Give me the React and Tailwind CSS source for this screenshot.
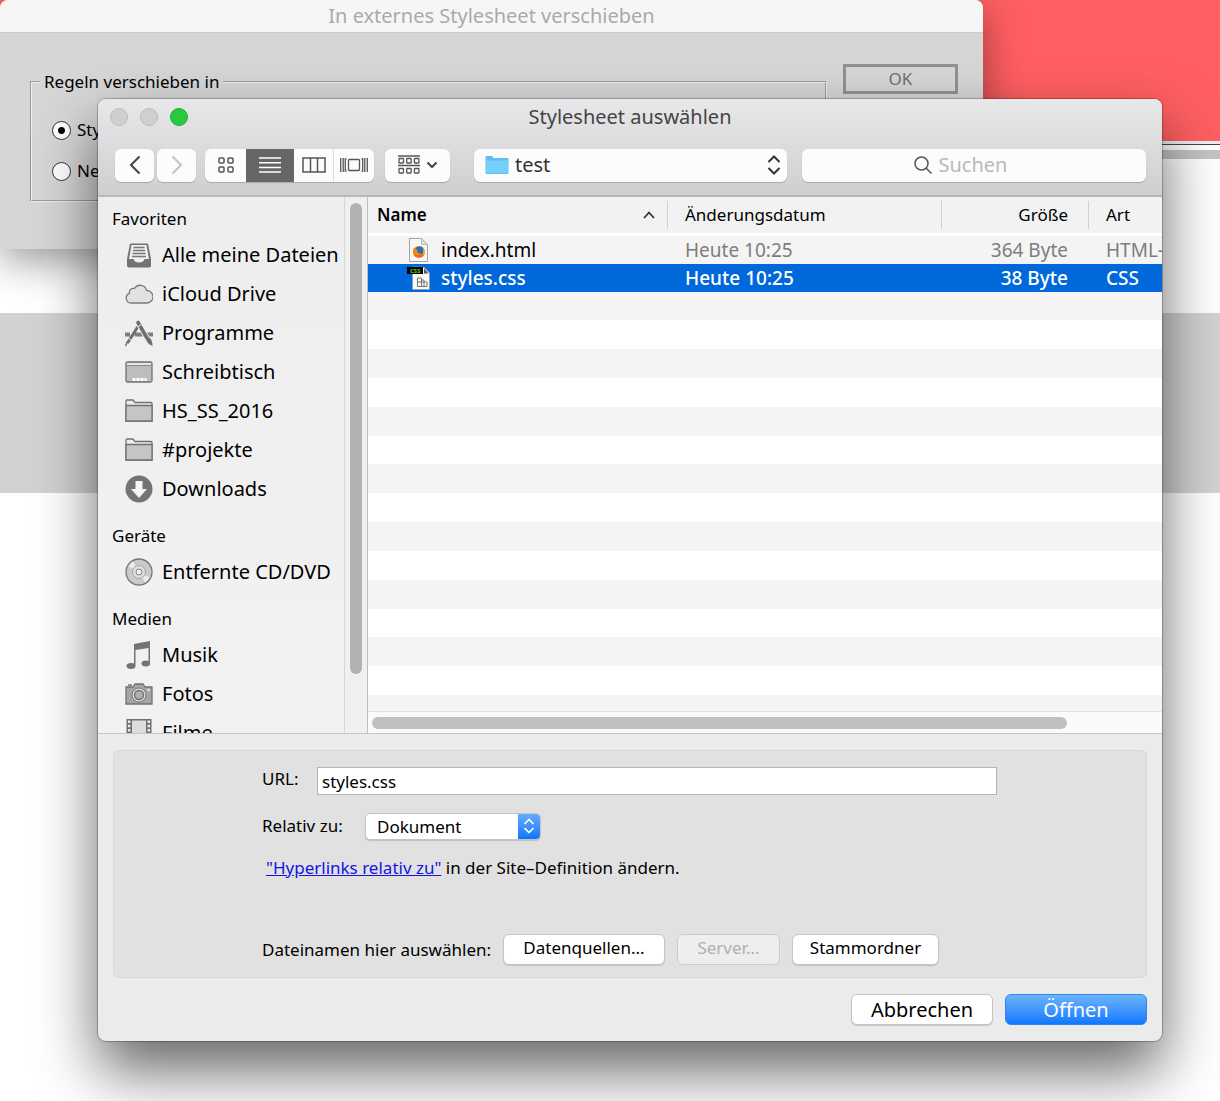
import React, { useState } from 'react';

const favorites = [
  { label: 'Alle meine Dateien', icon: 'tray' },
  { label: 'iCloud Drive', icon: 'cloud' },
  { label: 'Programme', icon: 'apps' },
  { label: 'Schreibtisch', icon: 'desktop' },
  { label: 'HS_SS_2016', icon: 'folder' },
  { label: '#projekte', icon: 'folder' },
  { label: 'Downloads', icon: 'download' },
];

const sections = [
  { title: 'Favoriten', items: favorites },
  { title: 'Geräte', items: [{ label: 'Entfernte CD/DVD', icon: 'disc' }] },
  {
    title: 'Medien',
    items: [
      { label: 'Musik', icon: 'music' },
      { label: 'Fotos', icon: 'camera' },
      { label: 'Filme', icon: 'film' },
    ],
  },
];

const files = [
  { name: 'index.html', date: 'Heute 10:25', size: '364 Byte', kind: 'HTML-' },
  { name: 'styles.css', date: 'Heute 10:25', size: '38 Byte', kind: 'CSS' },
];

const SidebarIcon = ({ name }) => {
  const drawings = {
    tray: (
      <>
        <path d="M6 2.500h16q1 0 1.200 1L26 18v6.500q0 2-2 2H4q-2 0-2-2V18L4.800 3.500q.2-1 1.200-1z" fill="#737373" />
        <path d="M6.500 4h15L24 18h-4.500c-.8 2.600-2.600 3.500-5.500 3.500S9.300 20.600 8.500 18H4z" fill="#eee" />
        <path d="M8.500 6.500h11M8 9.500h12M7.500 12.500h13M7 15.500h14" stroke="#777" strokeWidth="1.300" />
      </>
    ),
    cloud: (
      <path
        d="M6 23A5 5 0 0 1 4.500 13.300 4 4 0 0 1 9.500 8.500 6.500 6.500 0 0 1 21.500 10.500 6 6 0 0 1 22 23z"
        fill="#e2e2e2"
        stroke="#7b7b7b"
        strokeWidth="1.300"
      />
    ),
    apps: (
      <>
        <path d="M0 15.500h5M9.500 15.500h8.500M22 15.500h6" stroke="#808080" strokeWidth="4" />
        <path d="M15.500 3.500L2.500 24" stroke="#6e6e6e" strokeWidth="3" />
        <path d="M2.500 22.500L.5 27" stroke="#6e6e6e" strokeWidth="1.500" />
        <path d="M13 3.500l9 15.500" stroke="#f0eff0" strokeWidth="5.500" />
        <path d="M13 3.500l9 15.500" stroke="#6e6e6e" strokeWidth="3.600" strokeLinecap="round" />
        <path d="M21 20.500l3.500-2c2 2 3 4.500 3 8.500-3.500-1.300-5.500-3.500-6.500-6.500z" fill="#6e6e6e" />
        <path d="M13 7.500l4-2.200M3.500 19.500l3 2" stroke="#f0eff0" />
      </>
    ),
    desktop: (
      <>
        <rect x="1" y="4" width="26" height="20" rx="1.500" fill="#bdbdbd" stroke="#717171" strokeWidth="1.300" />
        <path d="M2 6h24" stroke="#f4f4f4" strokeWidth="1.500" />
        <path d="M2 7.500h24" stroke="#8a8a8a" />
        <path d="M7.500 21.500h3m1 0h3m1 0h3m1 0h2" stroke="#fff" strokeWidth="3" />
      </>
    ),
    folder: (
      <>
        <path d="M1 24V4q0-1 1-1h6l2 2.500h16q1 0 1 1V24z" fill="#ececec" stroke="#717171" strokeWidth="1.300" />
        <path d="M1 8.500h26V24H1z" fill="#c5c5c5" stroke="#717171" strokeWidth="1.300" />
      </>
    ),
    download: (
      <>
        <circle cx="14" cy="14" r="13.500" fill="#747474" />
        <path d="M10.500 6h7v8H22l-8 9-8-9h4.500z" fill="#f4f4f4" />
      </>
    ),
    disc: (
      <>
        <circle cx="14" cy="14" r="13" fill="#cacaca" stroke="#757575" strokeWidth="1.300" />
        <path d="M14 14L3.500 8.500A12 12 0 0 1 8 3.500zM14 14l10.500 5.500a12 12 0 0 1-4.500 5z" fill="#ececec" />
        <circle cx="14" cy="14" r="6.500" fill="#dedede" stroke="#a5a5a5" />
        <circle cx="14" cy="14" r="3" fill="#f2f2f2" stroke="#858585" />
      </>
    ),
    music: (
      <>
        <path d="M9 3l16-3v23h-1.500V7L10.500 9v15.500H9z" fill="#737373" />
        <ellipse cx="6" cy="25" rx="4.500" ry="3" fill="#737373" />
        <ellipse cx="20.800" cy="22.500" rx="4.300" ry="3" fill="#737373" />
      </>
    ),
    camera: (
      <>
        <path d="M1 7h7l2-3h8l2 3h7v17H1z" fill="#a5a5a5" stroke="#717171" strokeWidth="1.300" />
        <path d="M3 5h4" stroke="#717171" strokeWidth="1.500" />
        <circle cx="14" cy="15" r="7" fill="#e4e4e4" stroke="#717171" />
        <circle cx="14" cy="15" r="4.500" fill="#b0b0b0" stroke="#717171" strokeWidth="1.500" />
        <circle cx="23.500" cy="10" r="1.200" fill="#eee" />
      </>
    ),
    film: (
      <>
        <path d="M1.500 0h25v27h-25z" fill="#6e6e6e" />
        <path d="M7 1.500h14v12.500H7zM7 15.500h14V26H7z" fill="#dcdcdc" />
        <path d="M4.200 1.500V27M23.800 1.500V27" stroke="#eee" strokeWidth="2.500" strokeDasharray="2.500 1.700" />
      </>
    ),
  };

  return (
    <svg viewBox="0 0 28 28" className="h-7 w-7 shrink-0" fill="none" aria-hidden="true">
      {drawings[name]}
    </svg>
  );
};

const HtmlFileIcon = () => (
  <svg viewBox="0 0 24 24" className="h-6 w-6 shrink-0" fill="none" aria-hidden="true">
    <path d="M2.500 .5h12l6 6v17h-18z" fill="#f7f7f7" stroke="#a5a5a5" />
    <path d="M14.500 .5l6 6h-6z" fill="#ddd" stroke="#aaa" strokeWidth=".7" />
    <circle cx="12" cy="14" r="6" fill="#e8701a" />
    <circle cx="12.500" cy="12.500" r="4" fill="#2c6fb5" />
    <path d="M6.500 10c2 .2 2.500 1.500 4 2-.8 2.500 1 4 3.500 3-1 3.500-7 3-8-1z" fill="#f08a1d" />
    <path d="M16 9.500c2.500 2.500 2.500 6.500-.5 8.500 1.200-3 1.200-5.500.5-8.500z" fill="#fbc02d" />
  </svg>
);

const CssFileIcon = () => (
  <svg viewBox="0 0 24 24" className="h-6 w-6 shrink-0" fill="none" aria-hidden="true">
    <path d="M5.500 1h11l6 6v16.500h-17z" fill="#f7f7f7" stroke="#999" strokeWidth=".7" />
    <path d="M17 2.500l4.500 5H17z" fill="#555" />
    <path d="M0 1h16v7H0z" fill="#000" />
    <text x="3" y="7" fontSize="6" fontWeight="700" fill="#55cc22">CSS</text>
    <path d="M10.500 12h4v8.500h-4zM10.500 16h9.500v4.500h-9.500zM14.500 14h2.500v6" stroke="#777" />
  </svg>
);

const StylesheetWindow = () => {
  const [target, setTarget] = useState('existing');

  return (
    <section className="absolute top-0 left-0 right-[237px] overflow-hidden rounded-lg bg-[#d6d6d6] text-[17px] text-black shadow-[0_12px_40px_rgba(0,0,0,0.4)]">
      <h1 className="flex h-[33px] items-center justify-center border-b border-[#cccccc] bg-[#f6f6f6] text-xl text-[#aaaaaa]">
        In externes Stylesheet verschieben
      </h1>
      <div className="flex items-start gap-4 pt-[31px] pr-[25px] pb-[47px] pl-[30px]">
        <div className="flex-1 pt-[6px]">
          <fieldset className="border-2 border-[#eeeeee] px-5 pb-[17px] [border-style:groove]">
            <legend className="-ml-3 px-1 leading-6">Regeln verschieben in</legend>
            <div className="flex flex-col gap-[17px] pt-[24px]">
              <label className="flex h-6 items-center gap-[6px]">
                <input
                  type="radio"
                  name="target"
                  checked={target === 'existing'}
                  onChange={() => setTarget('existing')}
                  className="h-[19px] w-[19px] appearance-none rounded-full border border-[#333333] bg-white checked:bg-[radial-gradient(circle,#000_3px,#fff_4px)]"
                />
                Stylesheet
              </label>
              <label className="flex h-6 items-center gap-[6px]">
                <input
                  type="radio"
                  name="target"
                  checked={target === 'new'}
                  onChange={() => setTarget('new')}
                  className="h-[19px] w-[19px] appearance-none rounded-full border border-[#333333] bg-white checked:bg-[radial-gradient(circle,#000_3px,#fff_4px)]"
                />
                Neues Stylesheet
              </label>
            </div>
          </fieldset>
        </div>
        <button className="h-[30px] w-[115px] border-3 border-[#929292] leading-5 text-[#707070]">OK</button>
      </div>
    </section>
  );
};

const Toolbar = () => (
  <div className="flex h-[34px] items-center pr-4 pl-[17px] text-xl text-[#333333]">
    <div className="flex gap-[3px]">
      <button aria-label="Zurück" className="flex h-[33px] w-[39px] items-center justify-center rounded-md bg-[#fcfcfc] shadow-[0_1px_1px_rgba(0,0,0,0.2)]">
        <svg viewBox="0 0 12 20" className="h-5 w-3" fill="none" stroke="#444" strokeWidth="2"><path d="M10.500 1.500L2 10l8.500 8.500" /></svg>
      </button>
      <button aria-label="Vorwärts" disabled className="flex h-[33px] w-[39px] items-center justify-center rounded-md bg-[#fcfcfc] shadow-[0_1px_1px_rgba(0,0,0,0.2)]">
        <svg viewBox="0 0 12 20" className="h-5 w-3" fill="none" stroke="#c2c2c2" strokeWidth="2"><path d="M1.500 1.500L10 10l-8.500 8.500" /></svg>
      </button>
    </div>
    <div className="ml-[9px] flex h-[33px] overflow-hidden rounded-md bg-[#fcfcfc] shadow-[0_1px_1px_rgba(0,0,0,0.2)]">
      <button aria-label="Symbole" className="flex w-[41px] items-center justify-center">
        <svg viewBox="0 0 16 16" className="h-4 w-4" fill="none" stroke="#555" strokeWidth="1.500">
          <rect x="1" y="1" width="5" height="5" rx="1" />
          <rect x="10" y="1" width="5" height="5" rx="1" />
          <rect x="1" y="10" width="5" height="5" rx="1" />
          <rect x="10" y="10" width="5" height="5" rx="1" />
        </svg>
      </button>
      <button aria-label="Liste" className="flex w-12 items-center justify-center bg-[#666666]">
        <svg viewBox="0 0 22 18" className="h-[18px] w-[22px]" stroke="#fff" strokeWidth="1.500"><path d="M0 2h22M0 6.700h22M0 11.400h22M0 16h22" /></svg>
      </button>
      <button aria-label="Spalten" className="flex w-10 items-center justify-center border-r border-[#dddddd]">
        <svg viewBox="0 0 24 16" className="h-4 w-6" fill="none" stroke="#555" strokeWidth="1.500"><path d="M1 1h22v14H1zM8.500 1v14M15.500 1v14" /></svg>
      </button>
      <button aria-label="Cover Flow" className="flex w-10 items-center justify-center">
        <svg viewBox="0 0 28 16" className="h-4 w-7" fill="none" stroke="#555" strokeWidth="1.300">
          <rect x="8.500" y="2.500" width="11" height="11" rx="1" />
          <path d="M.7 1v14M3.200 1v14M6.500 2H5.300v12h1.200M21.500 2h1.200v12h-1.200M24.800 1v14M27.300 1v14" />
        </svg>
      </button>
    </div>
    <button aria-label="Objekte gruppieren" className="ml-[11px] flex h-[33px] w-[65px] items-center justify-center gap-[6px] rounded-md bg-[#fcfcfc] shadow-[0_1px_1px_rgba(0,0,0,0.2)]">
      <svg viewBox="0 0 22 20" className="h-5 w-[22px]" fill="none" stroke="#555" strokeWidth="1.300">
        <path d="M0 1h22M0 10.500h22" />
        <rect x="1" y="3.500" width="4.500" height="4.500" rx=".5" />
        <rect x="8.700" y="3.500" width="4.500" height="4.500" rx=".5" />
        <rect x="16.400" y="3.500" width="4.500" height="4.500" rx=".5" />
        <rect x="1" y="13.500" width="4.500" height="4.500" rx=".5" />
        <rect x="8.700" y="13.500" width="4.500" height="4.500" rx=".5" />
        <rect x="16.400" y="13.500" width="4.500" height="4.500" rx=".5" />
      </svg>
      <svg viewBox="0 0 12 8" className="h-2 w-3" fill="none" stroke="#444" strokeWidth="2"><path d="M1.500 1.500L6 6l4.500-4.500" /></svg>
    </button>
    <div className="ml-6 flex h-[33px] flex-[296] items-center rounded-md bg-[#fcfcfc] pr-[6px] pl-[11px] shadow-[0_1px_1px_rgba(0,0,0,0.2)]">
      <svg viewBox="0 0 24 20" className="h-5 w-6 shrink-0" aria-hidden="true">
        <path d="M.5 18V2q0-1 1-1h5.500l1.500 2H23q.5 0 .5 1v14q0 1-1 1h-21q-1 0-1-1z" fill="#5cbfec" />
        <path d="M1 5.500h22V18H1z" fill="#74cffa" />
      </svg>
      <select aria-label="Ordner" className="h-full min-w-0 flex-1 appearance-none pl-[6px] text-xl outline-none">
        <option>test</option>
      </select>
      <svg viewBox="0 0 14 20" className="h-5 w-[14px] shrink-0" fill="none" stroke="#333" strokeWidth="2" aria-hidden="true">
        <path d="M1.500 7L7 1.500 12.500 7M1.500 13L7 18.500 12.500 13" />
      </svg>
    </div>
    <label className="ml-[15px] flex h-[33px] flex-[344] items-center justify-center gap-[7px] rounded-md bg-[#fcfcfc] shadow-[0_1px_1px_rgba(0,0,0,0.2)]">
      <svg viewBox="0 0 18 18" className="h-[18px] w-[18px]" fill="none" stroke="#555" strokeWidth="1.500" aria-hidden="true">
        <circle cx="7.500" cy="7.500" r="6.500" />
        <path d="M12 12l5.500 5.500" />
      </svg>
      <input type="search" aria-label="Suchen" placeholder="Suchen" className="w-24 text-xl outline-none placeholder:text-[#b9b9b9]" />
    </label>
  </div>
);

const Sidebar = () => (
  <nav className="flex h-[536px] w-[247px] shrink-0 flex-col gap-3 overflow-hidden border-r border-[#d6d6d6] bg-linear-to-b from-[#efeeef] to-[#f3f2f2] pt-[6px]">
    {sections.map((section) => (
      <div key={section.title} className="shrink-0">
        <h3 className="flex h-8 items-center pl-[14px] text-[17px] text-black">{section.title}</h3>
        <ul>
          {section.items.map((item) => (
            <li key={item.label}>
              <a href="#" className="flex h-[39px] items-center gap-[9px] pl-[27px] text-xl whitespace-nowrap text-black">
                <SidebarIcon name={item.icon} />
                {item.label}
              </a>
            </li>
          ))}
        </ul>
      </div>
    ))}
  </nav>
);

const FileList = () => {
  const [selected, setSelected] = useState('styles.css');

  return (
    <div className="flex h-[536px] min-w-0 flex-1 flex-col overflow-hidden border-l border-[#bdbdbd] bg-white">
      <table className="w-full table-fixed border-collapse text-left text-[19px]">
        <thead className="border-b border-[#c4c4c4] bg-[#f2f2f2] text-[17px] text-black">
          <tr className="h-[37px]">
            <th className="p-0 pl-[9px] font-semibold">
              <div className="flex h-7 items-center justify-between border-r border-[#d0d0d0] pr-3">
                Name
                <svg viewBox="0 0 12 8" className="h-2 w-3" fill="none" stroke="#333" strokeWidth="1.800"><path d="M1 7l5-5.500L11 7" /></svg>
              </div>
            </th>
            <th className="w-[274px] p-0 font-normal">
              <div className="flex h-7 items-center border-r border-[#d0d0d0] pl-[17px]">Änderungsdatum</div>
            </th>
            <th className="w-[147px] p-0 font-normal">
              <div className="flex h-7 items-center justify-end border-r border-[#d0d0d0] pr-5">Größe</div>
            </th>
            <th className="w-[73px] p-0 pl-[17px] font-normal">Art</th>
          </tr>
        </thead>
        <tbody className="border-t-3 border-white">
          {files.map((file) => {
            const active = file.name === selected;
            return (
              <tr
                key={file.name}
                onClick={() => setSelected(file.name)}
                className={active ? 'h-7 bg-[#0068da] text-white' : 'h-7 bg-[#f4f4f4] text-[#7d7d7d]'}
              >
                <td className="p-0 pl-[39px]">
                  <div className={active ? 'flex items-center gap-[10px] leading-7 font-medium' : 'flex items-center gap-[10px] leading-7 text-black'}>
                    {file.name.endsWith('.css') ? <CssFileIcon /> : <HtmlFileIcon />}
                    {file.name}
                  </div>
                </td>
                <td className={active ? 'p-0 pl-[17px] leading-7 font-medium' : 'p-0 pl-[17px] leading-7'}>{file.date}</td>
                <td className={active ? 'p-0 pr-[21px] text-right leading-7 font-medium' : 'p-0 pr-[21px] text-right leading-7'}>{file.size}</td>
                <td className={active ? 'p-0 pl-[17px] leading-7 whitespace-nowrap font-medium' : 'p-0 pl-[17px] leading-7 whitespace-nowrap'}>{file.kind}</td>
              </tr>
            );
          })}
        </tbody>
      </table>
      <div className="grid min-h-0 flex-1 grid-rows-[repeat(14,9fr)_5fr]">
        {Array.from({ length: 15 }, (_, i) => (
          <div key={i} className="odd:bg-[#f4f4f4]" />
        ))}
      </div>
      <div className="flex h-[22px] items-center border-t border-[#e2e2e2] bg-[#fafafa] pl-1">
        <div className="h-3 w-[88%] rounded-full bg-[#c0c0c0]" />
      </div>
    </div>
  );
};

const LinkOptions = () => {
  const [url, setUrl] = useState('styles.css');

  return (
    <div className="flex flex-col rounded-md border border-[#d8d8d8] bg-[#e1e1e1] pt-4 pb-3 pl-[148px] text-[17px] text-black">
      <div className="flex h-7 items-center pr-[149px]">
        <label htmlFor="url" className="w-[55px] pb-1">URL:</label>
        <input
          id="url"
          value={url}
          onChange={(e) => setUrl(e.target.value)}
          className="h-7 min-w-0 flex-1 border border-[#b5b5b5] bg-white px-1 outline-none"
        />
      </div>
      <div className="mt-[17px] flex h-7 items-center">
        <label htmlFor="relative" className="w-[103px]">Relativ zu:</label>
        <div className="flex h-[27px] w-44 overflow-hidden rounded-[5px] border border-[#c4c4c4] bg-white shadow-[0_1px_1px_rgba(0,0,0,0.15)]">
          <select id="relative" className="min-w-0 flex-1 appearance-none pl-[11px] outline-none">
            <option>Dokument</option>
            <option>Stammordner</option>
          </select>
          <span className="flex w-[22px] items-center justify-center bg-linear-to-b from-[#63aefb] to-[#0a74fb]">
            <svg viewBox="0 0 12 16" className="h-4 w-3" fill="none" stroke="#fff" strokeWidth="1.700" aria-hidden="true">
              <path d="M1.500 6L6 1.500 10.500 6M1.500 10L6 14.500 10.500 10" />
            </svg>
          </span>
        </div>
      </div>
      <p className="mt-4 pl-1 leading-6">
        <a href="#" className="text-[#1414e6] underline">"Hyperlinks relativ zu"</a> in der Site–Definition ändern.
      </p>
      <div className="mt-[54px] flex h-[31px] items-center gap-3">
        <span className="w-[229px] whitespace-nowrap">Dateinamen hier auswählen:</span>
        <button className="h-[31px] w-[162px] rounded-md border border-[#c4c4c4] bg-white pb-1 shadow-[0_1px_1px_rgba(0,0,0,0.15)]">Datenquellen...</button>
        <button disabled className="h-[31px] w-[103px] rounded-md border border-[#cccccc] bg-[#eeeeee] pb-1 text-[#b0b0b0]">Server...</button>
        <button className="h-[31px] w-[147px] rounded-md border border-[#c4c4c4] bg-white pb-1 shadow-[0_1px_1px_rgba(0,0,0,0.15)]">Stammordner</button>
      </div>
    </div>
  );
};

const FileDialog = () => (
  <section className="absolute top-[99px] right-[58px] left-[98px] overflow-hidden rounded-lg bg-[#ebebeb] shadow-[0_0_1px_1px_rgba(0,0,0,0.25),0_30px_60px_rgba(0,0,0,0.6)]">
    <header className="border-b-2 border-[#b8b8b8] bg-linear-to-b from-[#e8e7e9] to-[#cfced1] pb-[13px]">
      <div className="grid h-[49px] grid-cols-[1fr_auto_1fr] items-start px-3">
        <div className="flex gap-3 pt-[9px]">
          <button aria-label="Schließen" className="h-[18px] w-[18px] rounded-full border border-[#bdbdbd] bg-[#d0cfd0]" />
          <button aria-label="Minimieren" className="h-[18px] w-[18px] rounded-full border border-[#bdbdbd] bg-[#d0cfd0]" />
          <button aria-label="Zoomen" className="h-[18px] w-[18px] rounded-full border border-[#1fad34] bg-[#27c93f]" />
        </div>
        <h2 className="pt-1 text-xl leading-7 text-[#444444]">Stylesheet auswählen</h2>
      </div>
      <Toolbar />
    </header>
    <div className="flex border-b border-[#c6c6c6]">
      <Sidebar />
      <div className="w-[22px] shrink-0 bg-[#f0f0f0] px-[5px] pt-[6px]">
        <div className="h-[471px] w-3 rounded-full bg-[#b2b2b2]" />
      </div>
      <FileList />
    </div>
    <div className="px-[15px] pt-4">
      <LinkOptions />
      <footer className="flex justify-end gap-3 pt-4 pb-4 text-xl">
        <button className="h-[31px] w-[142px] rounded-md border border-[#c4c4c4] bg-white leading-7 text-black shadow-[0_1px_1px_rgba(0,0,0,0.15)]">Abbrechen</button>
        <button className="h-[31px] w-[142px] rounded-md border border-[#2b86f0] bg-linear-to-b from-[#6bb3fa] to-[#0a78fe] leading-7 text-white">Öffnen</button>
      </footer>
    </div>
  </section>
);

const App = () => (
  <main className="relative flex min-h-screen flex-col overflow-hidden bg-white font-['Noto_Sans',sans-serif]">
    <div className="h-[141px] bg-[#ff5f61]" />
    <div className="h-1 border-b border-[#444444] bg-[#eeeeee]" />
    <div className="h-[5px] bg-white" />
    <div className="h-[9px] bg-[#c4c4c4]" />
    <div className="h-[154px] bg-white" />
    <div className="h-[180px] bg-[#d2d2d2]" />
    <StylesheetWindow />
    <FileDialog />
  </main>
);

export default App;
